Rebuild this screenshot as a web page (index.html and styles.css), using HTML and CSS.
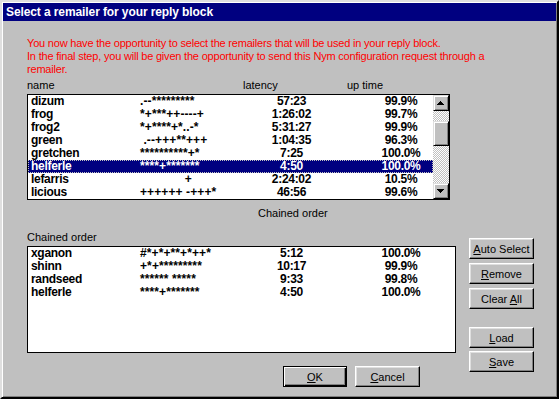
FILE: index.html
```html
<!DOCTYPE html>
<html lang="en">
<head>
    <meta charset="UTF-8">
    <title>Select a remailer for your reply block</title>
    <link rel="stylesheet" href="styles.css">
</head>
<body>
<div class="window">
    <div class="titlebar">Select a remailer for your reply block</div>
    <div class="content">
        <p class="intro">You now have the opportunity to select the remailers that will be used in your reply block.<br>In the final step, you will be given the opportunity to send this Nym configuration request through a<br>remailer.</p>

        <div class="heads">
            <span class="head-name">name</span>
            <span class="head-lat">latency</span>
            <span class="head-up">up time</span>
        </div>

        <div class="listbox list-top">
            <div class="rows">
                <div class="row"><span>dizum</span><span class="stat">.--*********</span><span class="c">57:23</span><span class="c up">99.9%</span></div>
                <div class="row"><span>frog</span><span class="stat">*+***++----+</span><span class="c">1:26:02</span><span class="c up">99.7%</span></div>
                <div class="row"><span>frog2</span><span class="stat">*+****+*..-*</span><span class="c">5:31:27</span><span class="c up">99.9%</span></div>
                <div class="row"><span>green</span><span class="stat"> .--+++**+++</span><span class="c">1:04:35</span><span class="c up">96.3%</span></div>
                <div class="row"><span>gretchen</span><span class="stat">**********+*</span><span class="c">7:25</span><span class="c up">100.0%</span></div>
                <div class="row current"><span>helferle</span><span class="stat">****+*******</span><span class="c">4:50</span><span class="c up">100.0%</span></div>
                <div class="row"><span>lefarris</span><span class="stat">             +</span><span class="c">2:24:02</span><span class="c up">10.5%</span></div>
                <div class="row"><span>licious</span><span class="stat">++++++ -+++*</span><span class="c">46:56</span><span class="c up">99.6%</span></div>
            </div>
            <div class="scrollbar">
                <div class="sb-btn">
                    <svg width="14" height="14" viewBox="0 0 14 14" shape-rendering="crispEdges"><rect x="6" y="5" width="1" height="1"/><rect x="5" y="6" width="3" height="1"/><rect x="4" y="7" width="5" height="1"/><rect x="3" y="8" width="7" height="1"/></svg>
                </div>
                <div class="sb-track"><div class="sb-thumb"></div></div>
                <div class="sb-btn">
                    <svg width="14" height="14" viewBox="0 0 14 14" shape-rendering="crispEdges"><rect x="3" y="5" width="7" height="1"/><rect x="4" y="6" width="5" height="1"/><rect x="5" y="7" width="3" height="1"/><rect x="6" y="8" width="1" height="1"/></svg>
                </div>
            </div>
        </div>

        <div class="caption">Chained order</div>

        <div class="lower">
            <div class="lower-left">
                <div class="label">Chained order</div>
                <div class="listbox list-chain">
                    <div class="rows">
                        <div class="row"><span>xganon</span><span class="stat">#*+*+**+*++*</span><span class="c">5:12</span><span class="c up">100.0%</span></div>
                        <div class="row"><span>shinn</span><span class="stat">+*+*********</span><span class="c">10:17</span><span class="c up">99.9%</span></div>
                        <div class="row"><span>randseed</span><span class="stat">****** *****</span><span class="c">9:33</span><span class="c up">99.8%</span></div>
                        <div class="row"><span>helferle</span><span class="stat">****+*******</span><span class="c">4:50</span><span class="c up">100.0%</span></div>
                    </div>
                </div>
                <div class="dlg-buttons">
                    <button class="btn btn-default btn-ok"><u>O</u>K</button>
                    <button class="btn"><u>C</u>ancel</button>
                </div>
            </div>
            <div class="side">
                <button class="btn"><u>A</u>uto Select</button>
                <button class="btn"><u>R</u>emove</button>
                <button class="btn">Clear <u>A</u>ll</button>
                <button class="btn btn-gap"><u>L</u>oad</button>
                <button class="btn btn-tight"><u>S</u>ave</button>
            </div>
        </div>
    </div>
</div>
</body>
</html>
```

FILE: styles.css
```css
* {
    margin: 0;
    padding: 0;
}

body {
    background: #c0c0c0;
    font-family: "Liberation Sans", Arial, sans-serif;
    font-size: 11px;
    color: #000;
}

.window {
    width: 559px;
    height: 399px;
    box-sizing: border-box;
    border: 2px solid;
    border-color: #dfdfdf #000 #000 #dfdfdf;
    box-shadow: inset 1px 1px #fff, inset -1px -1px #808080;
    padding: 1px;
    background: #c0c0c0;
    overflow: hidden;
}

.titlebar {
    height: 18px;
    line-height: 18px;
    background: #000080;
    color: #fff;
    font-weight: bold;
    font-size: 12px;
    letter-spacing: -0.1px;
    padding-left: 3px;
}

.content {
    padding-left: 24px;
}

.intro {
    margin-top: 16px;
    color: #f00;
    line-height: 13px;
    letter-spacing: -0.2px;
}

.heads {
    display: flex;
    margin-top: 3px;
    line-height: 13px;
}

.head-name {
    width: 216px;
}

.head-lat {
    width: 104px;
}

.listbox {
    display: flex;
    box-sizing: border-box;
    border: 1px solid #000;
    background: #fff;
    margin-top: 2px;
}

.list-top {
    width: 423px;
    height: 106px;
}

.list-chain {
    width: 429px;
    height: 107px;
}

.rows {
    flex: 1;
}

.row {
    display: grid;
    grid-template-columns: 112px 113px 77px 102px;
    height: 13px;
    line-height: 13px;
    font-size: 12px;
    font-weight: bold;
    letter-spacing: -0.3px;
    white-space: pre;
}

.row span:first-child {
    padding-left: 3px;
}

.row .stat {
    letter-spacing: 0.1px;
}

.row .c {
    text-align: center;
}

.row .up {
    padding-left: 40px;
}

.row.current {
    background: #000080;
    color: #fff;
    outline: 1px dotted #c0c0c0;
    outline-offset: -1px;
}

.scrollbar {
    width: 16px;
    display: flex;
    flex-direction: column;
}

.sb-btn,
.sb-thumb {
    box-sizing: border-box;
    background: #c0c0c0;
    border: 1px solid;
    border-color: #dfdfdf #000 #000 #dfdfdf;
    box-shadow: inset 1px 1px #fff, inset -1px -1px #808080;
}

.sb-btn {
    height: 16px;
}

.sb-btn svg {
    display: block;
}

.sb-track {
    flex: 1;
    background: repeating-conic-gradient(#c0c0c0 0 25%, #fff 0 50%) 0 0 / 2px 2px;
}

.sb-thumb {
    height: 25px;
    margin-top: 10px;
}

.caption {
    margin-top: 7px;
    margin-left: 231px;
    line-height: 13px;
}

.lower {
    display: flex;
}

.label {
    margin-top: 11px;
    line-height: 13px;
}

.dlg-buttons {
    display: flex;
    gap: 8px;
    margin-top: 13px;
    margin-left: 256px;
}

.side {
    margin-left: 13px;
    padding-top: 18px;
    display: flex;
    flex-direction: column;
    gap: 4px;
}

.btn {
    display: block;
    width: 65px;
    height: 21px;
    box-sizing: border-box;
    background: #c0c0c0;
    border: 1px solid;
    border-color: #fff #000 #000 #fff;
    box-shadow: inset -1px -1px #808080, inset 1px 1px #dfdfdf;
    font-family: "Liberation Sans", Arial, sans-serif;
    font-size: 11px;
    color: #000;
    padding: 0;
}

.btn-ok {
    width: 64px;
}

.btn-default {
    border-color: #000;
    box-shadow: inset 1px 1px #fff, inset -1px -1px #000, inset -2px -2px #808080;
}

.btn-gap {
    margin-top: 14px;
}

.btn-tight {
    margin-top: -1px;
}
```
